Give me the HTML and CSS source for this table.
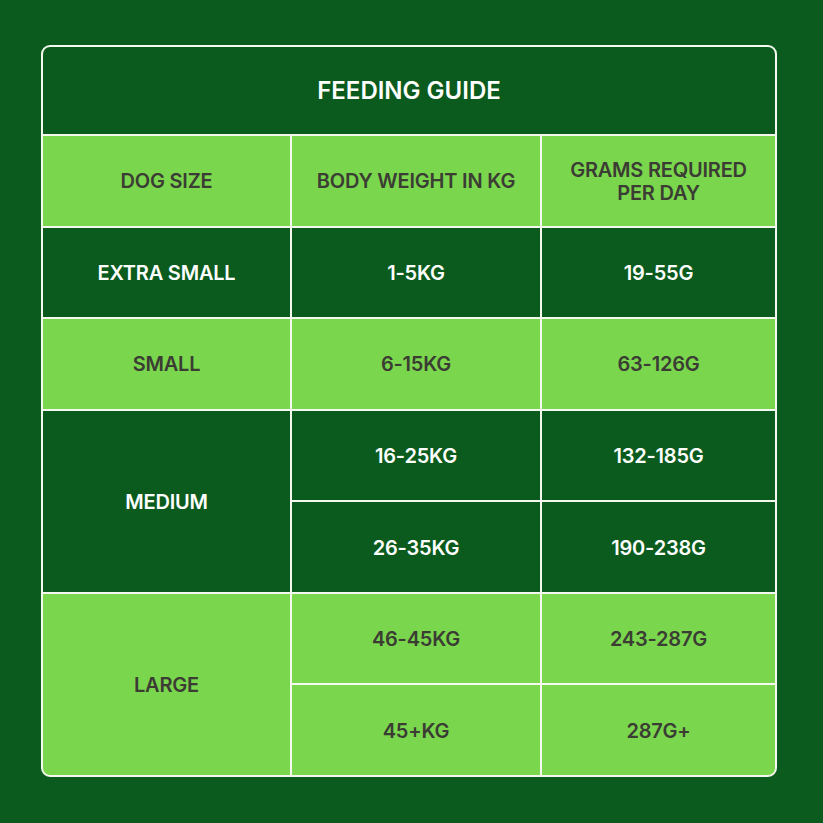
FILE: index.html
```html
<!DOCTYPE html>
<html>
<head>
<meta charset="utf-8">
<link rel="stylesheet" href="styles.css">
</head>
<body>
<div class="page">
  <div class="guide">
    <div class="cell title">FEEDING GUIDE</div>
    <div class="cell light">DOG SIZE</div>
    <div class="cell light">BODY WEIGHT IN KG</div>
    <div class="cell light">GRAMS REQUIRED<br>PER DAY</div>

    <div class="cell dark">EXTRA SMALL</div>
    <div class="cell dark">1-5KG</div>
    <div class="cell dark">19-55G</div>

    <div class="cell light">SMALL</div>
    <div class="cell light">6-15KG</div>
    <div class="cell light">63-126G</div>

    <div class="cell dark span2">MEDIUM</div>
    <div class="cell dark">16-25KG</div>
    <div class="cell dark">132-185G</div>
    <div class="cell dark">26-35KG</div>
    <div class="cell dark">190-238G</div>

    <div class="cell light span2">LARGE</div>
    <div class="cell light">46-45KG</div>
    <div class="cell light">243-287G</div>
    <div class="cell light">45+KG</div>
    <div class="cell light">287G+</div>
  </div>
</div>
</body>
</html>
```
FILE: styles.css
```css
html, body {
  margin: 0;
  padding: 0;
  background: #0a5b1d;
}
.page {
  width: 823px;
  height: 823px;
  padding: 45px 0 0 41px;
  box-sizing: border-box;
}
.guide {
  width: 736px;
  height: 732px;
  box-sizing: border-box;
  border: 2px solid #f4f8ee;
  border-radius: 9px;
  overflow: hidden;
  background: #f4f8ee;
  display: grid;
  grid-template-columns: 247px 248px 233px;
  grid-template-rows: 87px repeat(7, 1fr);
  gap: 2px;
  font-family: Inter, "Liberation Sans", sans-serif;
  font-weight: 600;
  font-size: 20px;
  letter-spacing: -0.01em;
  line-height: 1.15;
}
.cell {
  display: flex;
  align-items: center;
  justify-content: center;
  text-align: center;
  padding-top: 2px;
}
.title {
  grid-column: 1 / 4;
  background: #0a5b1d;
  color: #ffffff;
  font-size: 24px;
  letter-spacing: 0;
  padding-top: 0;
}
.light {
  background: #7ad64c;
  color: #3b3c34;
}
.dark {
  background: #0a5b1d;
  color: #ffffff;
}
.span2 {
  grid-row: span 2;
}
```
